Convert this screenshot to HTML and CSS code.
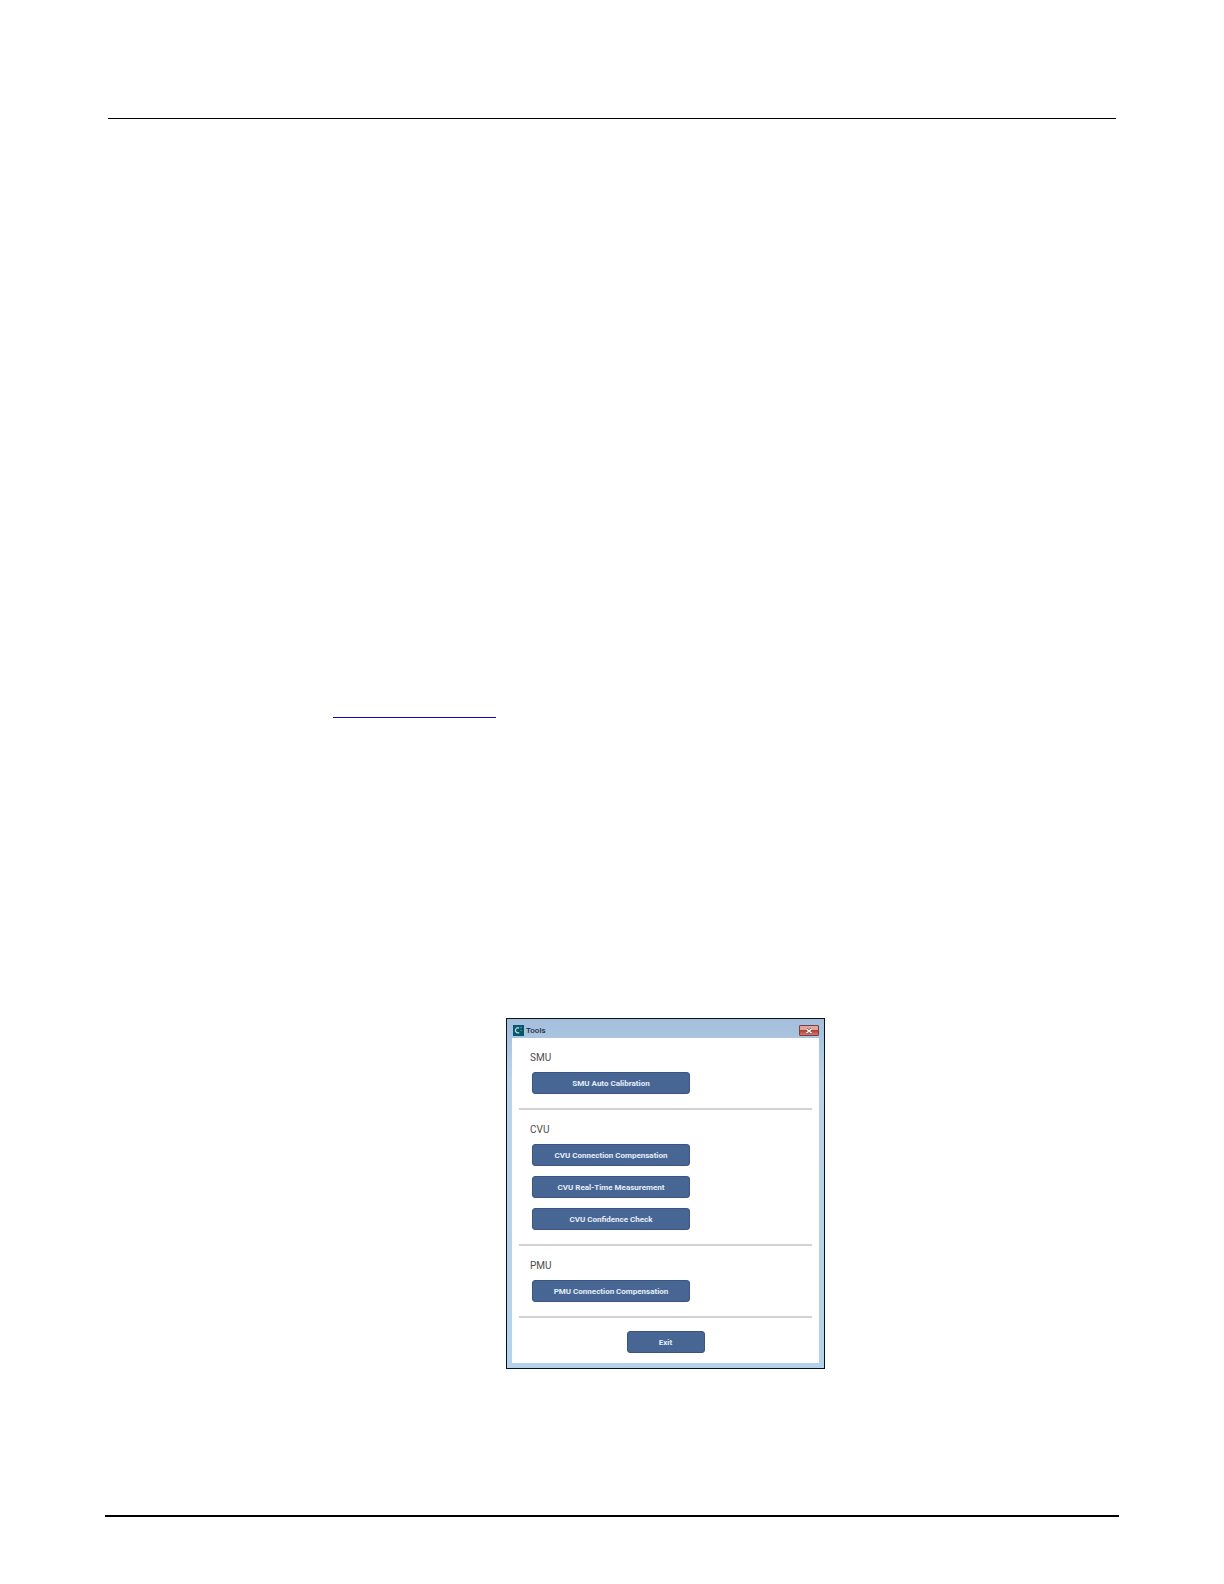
FILE: index.html
```
<!DOCTYPE html>
<html lang="en">
  <head>
    <meta charset="utf-8">
    <title>Tools</title>
    <link rel="stylesheet" href="styles.css">
  </head>
  <body>
    <header class="page_header"></header>

    <main class="page_body">
      <a class="page_link" href="#tools" aria-label="Tools"></a>

      <section class="dialog" id="tools">
        <div class="title_bar">
          <svg class="app_icon" viewBox="0 0 11 11" aria-hidden="true">
            <rect width="11" height="11" fill="#07566b"/>
            <path d="M6 3.2C4.800 2.200 2.400 2.900 2.400 5.300S4.800 8.500 6.200 7.500" fill="none" stroke="#b5d9e0" stroke-width="1.300"/>
            <path d="M7.300 2.500h1.400M7.300 5.500h1.200" stroke="#6fa9b6" stroke-width="1"/>
          </svg>
          <h1 class="title">Tools</h1>
          <button class="close" aria-label="Close">
            <svg class="close_icon" viewBox="0 0 8 6" aria-hidden="true">
              <path d="M1.500 1l5 4M6.500 1l-5 4" stroke="#6b4a4a" stroke-width="2.800"/>
              <path d="M1.500 1l5 4M6.500 1l-5 4" stroke="#fff" stroke-width="1.600"/>
            </svg>
          </button>
        </div>

        <div class="content">
          <div class="group">
            <h2 class="group_name">SMU</h2>
            <button class="tool">SMU Auto Calibration</button>
          </div>
          <div class="group">
            <h2 class="group_name">CVU</h2>
            <button class="tool">CVU Connection Compensation</button>
            <button class="tool">CVU Real-Time Measurement</button>
            <button class="tool">CVU Confidence Check</button>
          </div>
          <div class="group">
            <h2 class="group_name">PMU</h2>
            <button class="tool">PMU Connection Compensation</button>
          </div>
          <div class="actions">
            <button class="tool exit">Exit</button>
          </div>
        </div>
      </section>
    </main>

    <footer class="page_footer"></footer>
  </body>
</html>
```
FILE: styles.css
```
* {
  box-sizing: border-box;
}

body {
  margin: 0;
  background-color: #fff;
  font-family: Roboto, "Liberation Sans", sans-serif;
}

/* page rules */
.page_header {
  margin: 0 108px;
  padding-top: 118px;
  border-bottom: 1px solid #000;
}
.page_body {
  margin: 0 108px;
  padding: 580px 0 146px 107px;
}
.page_footer {
  margin: 0 105px 67px;
  border-top: 2px solid #000;
}
.page_link {
  display: block;
  width: 163px;
  height: 19px;
  margin-left: 118px;
  border-bottom: 1px solid #1408b4;
}

/* tools window */
.dialog {
  width: 319px;
  margin: 300px auto 0;
  padding: 0 5px 5px;
  border: 1px solid #05141d;
  background: linear-gradient(#a3bedb, #bcd3ea 60px, #b4d3ea);
}
.title_bar {
  display: flex;
  align-items: center;
  gap: 2px;
  height: 19px;
  padding: 4px 0 0 1px;
}
.app_icon {
  width: 11px;
  height: 11px;
}
.title {
  flex: 1;
  margin: 0;
  font-size: 8px;
  font-weight: 500;
  line-height: 12px;
  color: #1c2c42;
}
.close {
  display: flex;
  align-items: center;
  justify-content: center;
  width: 20px;
  height: 11px;
  padding: 0;
  border: 1px solid #7c3e45;
  border-radius: 1px;
  background: linear-gradient(#dfa69e 45%, #b83e2b 50%, #d27a68);
}
.close_icon {
  width: 8px;
  height: 6px;
}

.content {
  padding: 0 7px 10px;
  background-color: #fff;
}
.group {
  display: flex;
  flex-direction: column;
  align-items: flex-start;
  gap: 10px;
  padding: 12px 11px 14px;
  border-bottom: 2px solid #d2d2d2;
}
.group_name {
  margin: 0 0 -4px;
  font-size: 10px;
  font-weight: 400;
  line-height: 16px;
  color: #4c4c4c;
}
.tool {
  width: 158px;
  height: 22px;
  margin-left: 2px;
  padding: 0;
  border: 1px solid #3a5580;
  border-radius: 3px;
  background-color: #486694;
  font-family: inherit;
  font-size: 8px;
  font-weight: 700;
  color: #e6eefa;
}
.actions {
  display: flex;
  justify-content: center;
  padding-top: 13px;
}
.exit {
  width: 78px;
  margin-left: 0;
}
```
